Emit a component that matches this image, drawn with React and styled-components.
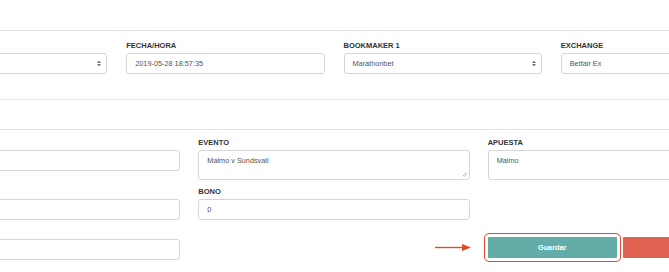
import styled, { createGlobalStyle } from 'styled-components';

const GlobalStyle = createGlobalStyle`
  html, body {
    margin: 0;
    padding: 0;
    background: #fff;
    overflow: hidden;
  }
  body {
    font-family: "Liberation Sans", Arial, sans-serif;
    color: #333;
  }
`;

const Page = styled.div`
  width: 669px;
  height: 272px;
  overflow: hidden;
  padding-top: 30px;
  box-sizing: border-box;
`;

const Section = styled.div`
  border-top: 1px solid #e4e4e4;
  padding: ${props => props.$pad};
`;

const Band = styled.div`
  height: 29px;
  border-top: 1px solid #e4e4e4;
`;

/* the form is scrolled, its first column starts left of the window */
const Form = styled.div`
  margin-left: -91px;
  width: 850px;
`;

const Grid = styled.div`
  display: grid;
  grid-template-columns: repeat(${props => props.$cols}, 1fr);
  column-gap: ${props => props.$gap}px;
  row-gap: 7px;
`;

const Field = styled.div`
  display: flex;
  flex-direction: column;
  min-width: 0;
`;

const Label = styled.label`
  font-size: 7.5px;
  font-weight: bold;
  line-height: 9px;
  height: 9px;
  margin-bottom: 3px;
  text-transform: uppercase;
  color: #333;
  white-space: nowrap;
`;

const Box = styled.div`
  position: relative;
  height: ${props => props.$h || 21}px;
  box-sizing: border-box;
  border: 1px solid #d6d6d6;
  border-radius: 3px;
  background: #fff;
  font-size: 7.3px;
  color: #555;
  padding: ${props => (props.$area ? '5px 8px' : '0 8px')};
  display: flex;
  align-items: ${props => (props.$area ? 'flex-start' : 'center')};
  white-space: nowrap;
`;

const Arrows = styled.svg`
  position: absolute;
  right: 5px;
  top: 50%;
  margin-top: -3.5px;
`;

const Grip = styled.svg`
  position: absolute;
  right: 2px;
  bottom: 2px;
`;

const Select = ({ value }) => (
  <Box>
    {value}
    <Arrows width="4" height="7" viewBox="0 0 4 7">
      <path d="M0 3L2 0.5L4 3Z M0 4L2 6.5L4 4Z" fill="#777" />
    </Arrows>
  </Box>
);

const Area = ({ value, grip }) => (
  <Box $h={30} $area>
    {value}
    {grip && (
      <Grip width="5" height="5" viewBox="0 0 5 5">
        <path d="M0.5 4.5L4.5 0.5 M2.5 4.5L4.5 2.5" stroke="#999" strokeWidth="0.7" />
      </Grip>
    )}
  </Box>
);

const Actions = styled.div`
  display: flex;
  gap: 6px;
  padding-top: 10px;
`;

const Button = styled.button`
  position: relative;
  width: 129px;
  height: 21px;
  flex-shrink: 0;
  border: none;
  border-radius: 1px;
  background: ${props => props.$bg};
  color: #fff;
  font-family: "Liberation Sans", Arial, sans-serif;
  font-size: 7.3px;
  font-weight: bold;
  padding: 0;
  outline: ${props => (props.$marked ? '1.6px solid #e5472f' : 'none')};
  outline-offset: 3px;
`;

const Pointer = styled.svg`
  position: absolute;
  right: calc(100% + 17px);
  top: 6px;
`;

const App = () => (
  <Page>
    <GlobalStyle />
    <Section $pad="10px 0 25px">
      <Form>
        <Grid $cols={4} $gap={19}>
          <Field>
            <Label />
            <Select value="" />
          </Field>
          <Field>
            <Label>Fecha/Hora</Label>
            <Box>2019-05-28 18:57:35</Box>
          </Field>
          <Field>
            <Label>Bookmaker 1</Label>
            <Select value="Marathonbet" />
          </Field>
          <Field>
            <Label>Exchange</Label>
            <Select value="Betfair Ex" />
          </Field>
        </Grid>
      </Form>
    </Section>
    <Band />
    <Section $pad="8px 0 0">
      <Form>
        <Grid $cols={3} $gap={18}>
          <Field>
            <Label />
            <Box />
          </Field>
          <Field>
            <Label>Evento</Label>
            <Area value="Malmo v Sundsvall" grip />
          </Field>
          <Field>
            <Label>Apuesta</Label>
            <Area value="Malmo" />
          </Field>
          <Field>
            <Label />
            <Box />
          </Field>
          <Field>
            <Label>Bono</Label>
            <Box>0</Box>
          </Field>
          <Field />
          <Field>
            <Label />
            <Box />
          </Field>
          <Field />
          <Actions>
            <Button $bg="#63aca8" $marked>
              <Pointer width="36" height="9" viewBox="0 0 36 9">
                <path d="M0 4.5H29" stroke="#e5472f" strokeWidth="1.4" />
                <path d="M27 1L36 4.5L27 8Z" fill="#e5472f" />
              </Pointer>
              Guardar
            </Button>
            <Button $bg="#e06352" />
          </Actions>
        </Grid>
      </Form>
    </Section>
  </Page>
);

export default App;
